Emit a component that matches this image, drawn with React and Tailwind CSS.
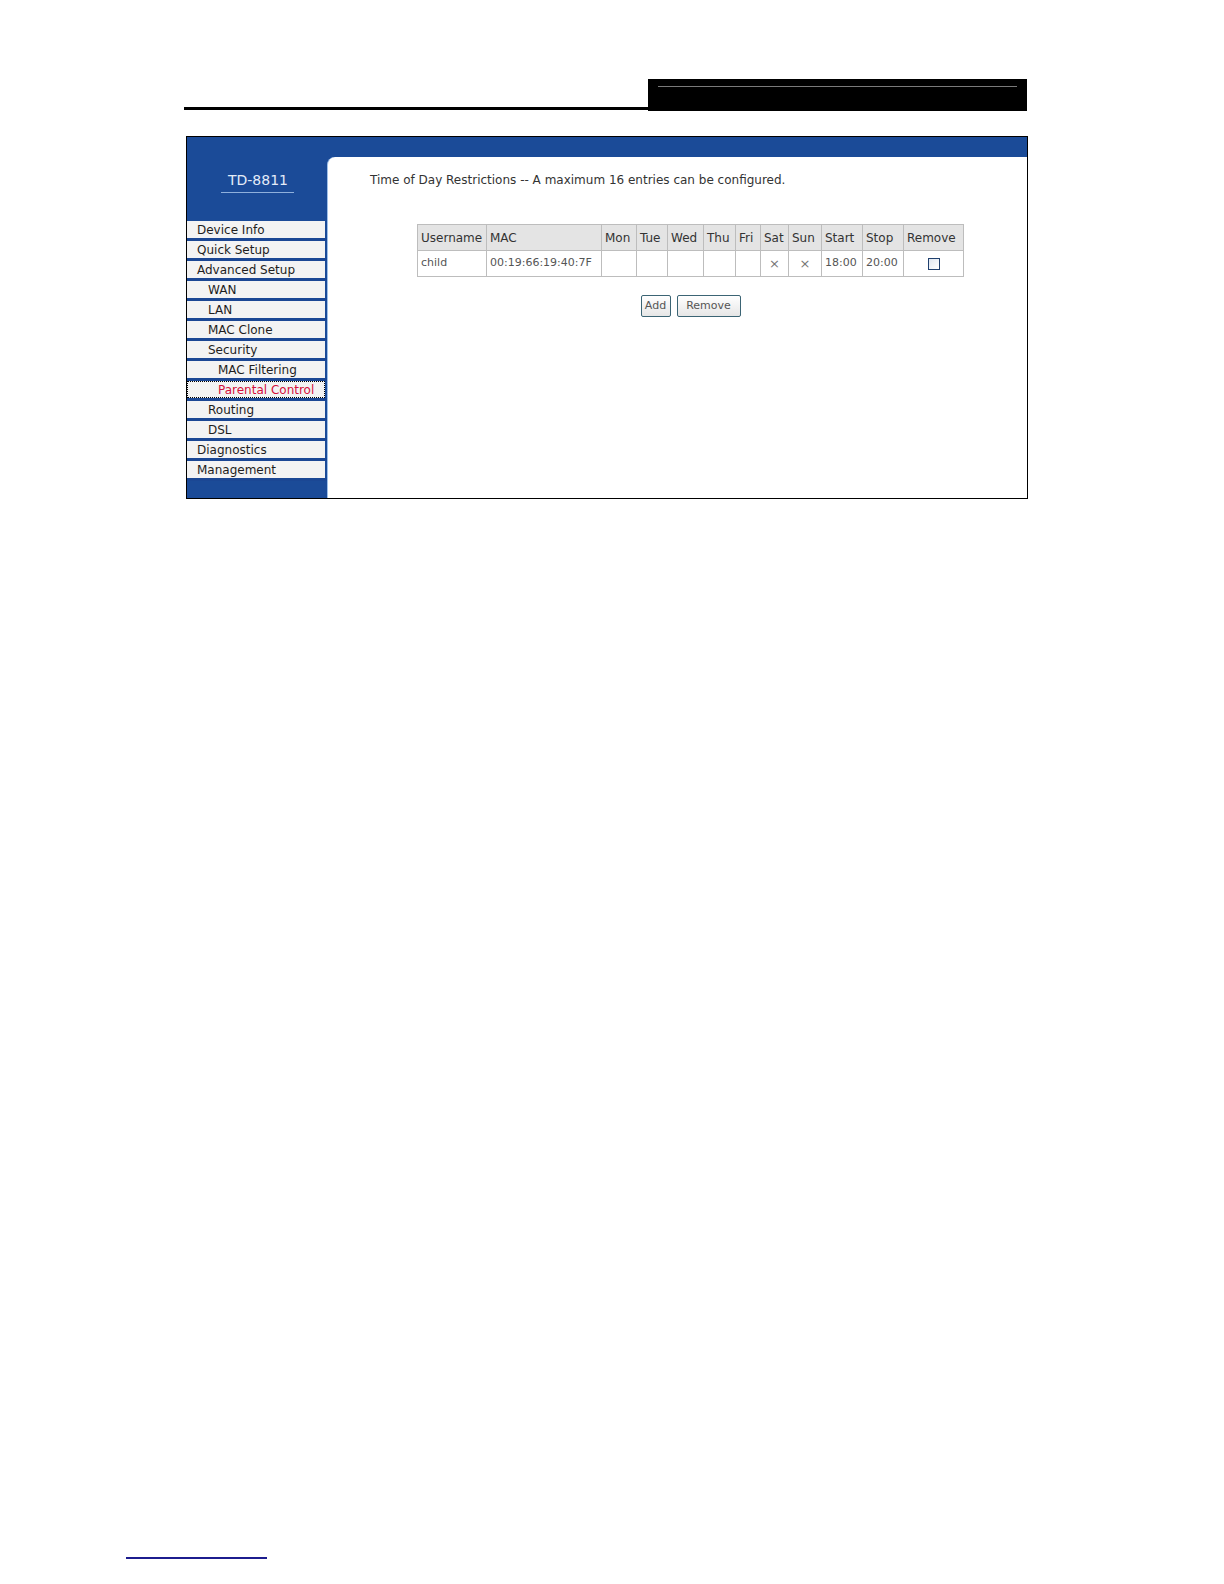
import React from "react";

const MENU = [
  { label: "Device Info", level: 0 },
  { label: "Quick Setup", level: 0 },
  { label: "Advanced Setup", level: 0 },
  { label: "WAN", level: 1 },
  { label: "LAN", level: 1 },
  { label: "MAC Clone", level: 1 },
  { label: "Security", level: 1 },
  { label: "MAC Filtering", level: 2 },
  { label: "Parental Control", level: 2, active: true },
  { label: "Routing", level: 1 },
  { label: "DSL", level: 1 },
  { label: "Diagnostics", level: 0 },
  { label: "Management", level: 0 },
];

const INDENT = ["pl-[10px]", "pl-[21px]", "pl-[31px]"];

const COLS = [
  { name: "Username", w: "w-[69px]" },
  { name: "MAC", w: "w-[115px]" },
  { name: "Mon", w: "w-[35px]" },
  { name: "Tue", w: "w-[31px]" },
  { name: "Wed", w: "w-[36px]" },
  { name: "Thu", w: "w-[32px]" },
  { name: "Fri", w: "w-[25px]" },
  { name: "Sat", w: "w-[28px]" },
  { name: "Sun", w: "w-[33px]" },
  { name: "Start", w: "w-[41px]" },
  { name: "Stop", w: "w-[41px]" },
  { name: "Remove", w: "w-[60px]" },
];

const ROW = ["child", "00:19:66:19:40:7F", "", "", "", "", "", "×", "×", "18:00", "20:00"];

function MenuItem({ item }) {
  return (
    <div className="h-[20px] border-b-[3px] border-[#1b4794]">
      <div
        className={
          "h-[17px] w-[138px] bg-[#f3f3f3] flex items-center text-[12px] leading-none " +
          INDENT[item.level] +
          (item.active
            ? " outline outline-1 outline-dotted outline-black -outline-offset-1 text-[#d4103c]"
            : " text-[#1e1e1e]")
        }
      >
        {item.label}
      </div>
    </div>
  );
}

function Button({ children, w }) {
  return (
    <button
      className={
        "h-[22px] rounded-[2px] border border-[#3b6474] bg-gradient-to-b from-white to-[#e6e6e6] text-[11px] text-[#555] " +
        w
      }
    >
      {children}
    </button>
  );
}

export default function App() {
  return (
    <div
      className="relative w-[1224px] h-[1584px] bg-white overflow-hidden"
      style={{ fontFamily: '"DejaVu Sans", Verdana, sans-serif' }}
    >
      {/* page header */}
      <div className="pt-[79px] pl-[184px] flex">
        <div className="w-[464px] h-[32px] flex items-end">
          <div className="w-full h-[3px] bg-black mb-[1px]" />
        </div>
        <div className="w-[379px] h-[32px] bg-black pt-[7px] px-[10px]">
          <div className="h-[1px] bg-[#7a7a7a]" />
        </div>
      </div>

      {/* router screenshot */}
      <div className="ml-[186px] mt-[25px] w-[842px] h-[363px] border border-black bg-[#1b4b98] flex">
        <div className="w-[140px] shrink-0 flex flex-col">
          <div className="h-[84px] flex flex-col items-center pt-[36px]">
            <div className="text-[14px] leading-none text-[#e4ecf8] pl-[2px]">TD-8811</div>
            <div className="mt-[5px] w-[73px] h-[1px] bg-[#8fb0dc]" />
          </div>
          {MENU.map((m) => (
            <MenuItem key={m.label} item={m} />
          ))}
        </div>
        <div className="flex-1 flex flex-col pt-[20px]">
          <div className="flex-1 bg-white rounded-tl-[8px] border-l border-[#9fc0e8] pl-[42px] pt-[17px]">
            <div className="text-[12px] leading-none text-[#333] whitespace-nowrap">
              Time of Day Restrictions -- A maximum 16 entries can be configured.
            </div>
            <div className="ml-[47px] mt-[38px] w-[546px]">
              <table className="border-collapse table-fixed w-[546px]">
                <thead>
                  <tr className="h-[26px] bg-[#e4e4e4]">
                    {COLS.map((c) => (
                      <th
                        key={c.name}
                        className={
                          "border border-[#bdbdbd] px-[3px] text-left font-normal text-[12px] text-[#333] whitespace-nowrap " +
                          c.w
                        }
                      >
                        {c.name}
                      </th>
                    ))}
                  </tr>
                </thead>
                <tbody>
                  <tr className="h-[26px]">
                    {ROW.map((v, i) => (
                      <td
                        key={i}
                        className={
                          "border border-[#bdbdbd] px-[3px] text-[11px] text-[#555] whitespace-nowrap " +
                          (v === "×" ? "text-center text-[13px] text-[#777]" : "")
                        }
                      >
                        {v}
                      </td>
                    ))}
                    <td className="border border-[#bdbdbd]">
                      <div className="mx-auto w-[12px] h-[12px] border border-[#20406e] bg-gradient-to-br from-[#dfe6ef] to-white" />
                    </td>
                  </tr>
                </tbody>
              </table>
              <div className="mt-[18px] flex justify-center gap-[6px] pl-[1px]">
                <Button w="w-[30px]">Add</Button>
                <Button w="w-[64px]">Remove</Button>
              </div>
            </div>
          </div>
        </div>
      </div>

      {/* footer rule */}
      <div className="absolute left-[126px] top-[1557px] w-[141px] h-[2px] bg-[#1c1c8e]" />
    </div>
  );
}
